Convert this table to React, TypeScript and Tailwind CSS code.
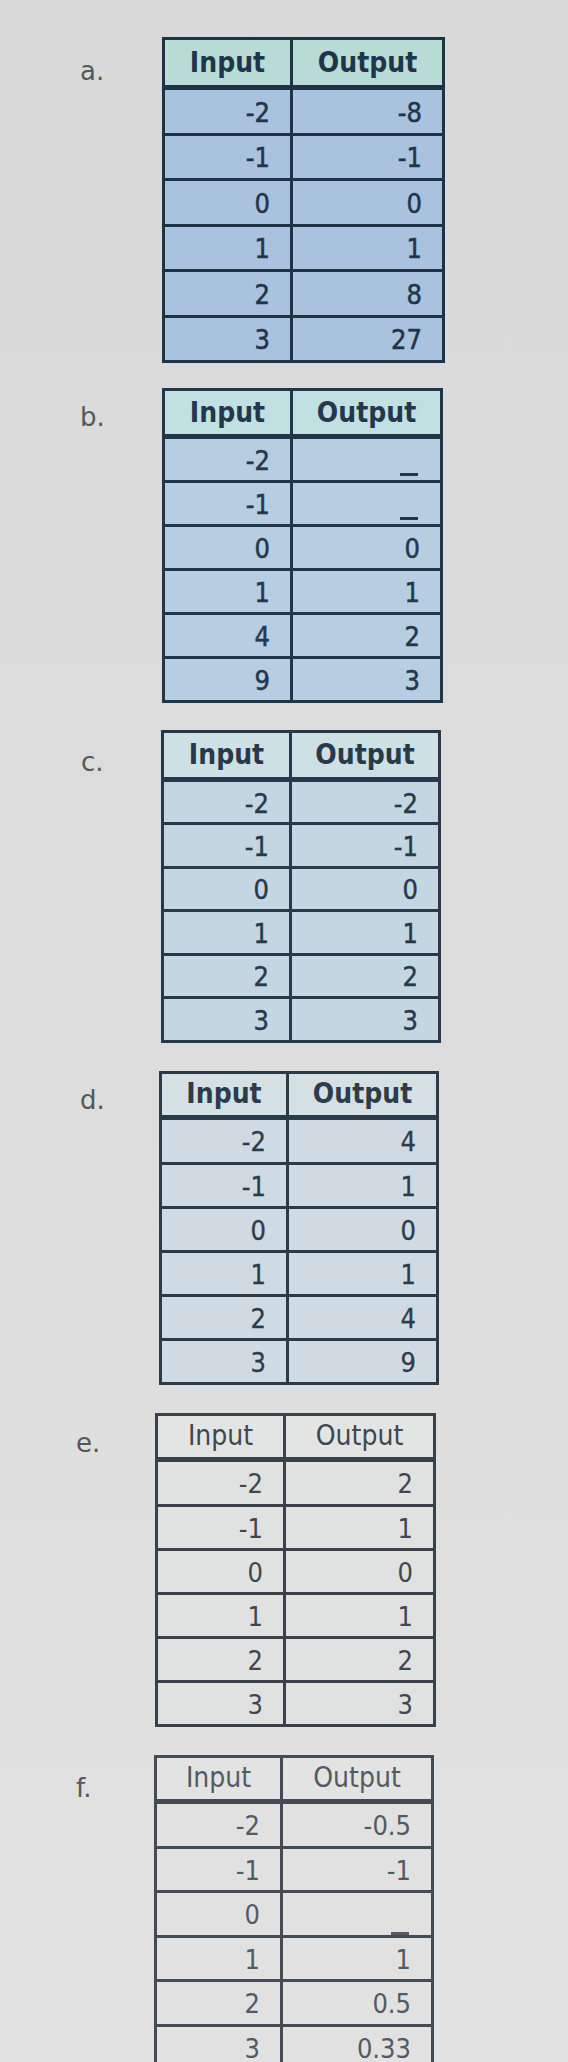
import React from "react";

type T = {
  label: string;
  rows: [string, string][];
  sectionCls: string;
  labelCls: string;
  tableCls: string;
  headCls: string;
  bodyCls: string;
  inCls: string;
  lineCls: string;
  textCls: string;
  dashCls: string;
  strokeCls: string;
  headH: string;
  rowH: string;
  firstRowH: string;
  headWeight: string;
};

const FONT = "font-['DejaVu_Sans_Condensed','DejaVu_Sans',sans-serif]";

const tables: T[] = [
  {
    label: "a.",
    rows: [["-2", "-8"], ["-1", "-1"], ["0", "0"], ["1", "1"], ["2", "8"], ["3", "27"]],
    sectionCls: "pt-[37px] pl-[80px]",
    labelCls: "w-[82px] pt-[21px]",
    tableCls: "w-[283px] border-[#1e3346]",
    headCls: "bg-[#b8dcd5]",
    bodyCls: "bg-[#a9c2dd]",
    inCls: "w-[128px]",
    lineCls: "border-[#1e3346]",
    textCls: "text-[#1f3549]",
    dashCls: "bg-[#1f3549]",
    strokeCls: "[-webkit-text-stroke:0.5px_#1f3549]",
    headH: "h-[45px]",
    rowH: "h-[45.5px]",
    firstRowH: "h-[47.5px]",
    headWeight: "font-bold",
  },
  {
    label: "b.",
    rows: [["-2", "_"], ["-1", "_"], ["0", "0"], ["1", "1"], ["4", "2"], ["9", "3"]],
    sectionCls: "pt-[25px] pl-[80px]",
    labelCls: "w-[82px] pt-[16px]",
    tableCls: "w-[281px] border-[#22364a]",
    headCls: "bg-[#c1e0e1]",
    bodyCls: "bg-[#b6cde2]",
    inCls: "w-[128px]",
    lineCls: "border-[#22364a]",
    textCls: "text-[#23384c]",
    dashCls: "bg-[#23384c]",
    strokeCls: "[-webkit-text-stroke:0.5px_#23384c]",
    headH: "h-[43px]",
    rowH: "h-[44px]",
    firstRowH: "h-[46px]",
    headWeight: "font-bold",
  },
  {
    label: "c.",
    rows: [["-2", "-2"], ["-1", "-1"], ["0", "0"], ["1", "1"], ["2", "2"], ["3", "3"]],
    sectionCls: "pt-[27px] pl-[81px]",
    labelCls: "w-[80px] pt-[19px]",
    tableCls: "w-[280px] border-[#27394a]",
    headCls: "bg-[#cde0e4]",
    bodyCls: "bg-[#c4d6e2]",
    inCls: "w-[128px]",
    lineCls: "border-[#27394a]",
    textCls: "text-[#27394b]",
    dashCls: "bg-[#27394b]",
    strokeCls: "[-webkit-text-stroke:0.4px_#27394b]",
    headH: "h-[44px]",
    rowH: "h-[43.5px]",
    firstRowH: "h-[45px]",
    headWeight: "font-bold",
  },
  {
    label: "d.",
    rows: [["-2", "4"], ["-1", "1"], ["0", "0"], ["1", "1"], ["2", "4"], ["3", "9"]],
    sectionCls: "pt-[28px] pl-[80px]",
    labelCls: "w-[79px] pt-[16px]",
    tableCls: "w-[280px] border-[#2c3b48]",
    headCls: "bg-[#d4e0e3]",
    bodyCls: "bg-[#cfdae2]",
    inCls: "w-[127px]",
    lineCls: "border-[#2c3b48]",
    textCls: "text-[#2e3c49]",
    dashCls: "bg-[#2e3c49]",
    strokeCls: "[-webkit-text-stroke:0.3px_#2e3c49]",
    headH: "h-[41px]",
    rowH: "h-[44px]",
    firstRowH: "h-[47px]",
    headWeight: "font-bold",
  },
  {
    label: "e.",
    rows: [["-2", "2"], ["-1", "1"], ["0", "0"], ["1", "1"], ["2", "2"], ["3", "3"]],
    sectionCls: "pt-[28px] pl-[76px]",
    labelCls: "w-[79px] pt-[17px]",
    tableCls: "w-[281px] border-[#3b4148]",
    headCls: "bg-[#e3e4e4]",
    bodyCls: "bg-[#e0e1e1]",
    inCls: "w-[128px]",
    lineCls: "border-[#3b4148]",
    textCls: "text-[#3f4750]",
    dashCls: "bg-[#3f4750]",
    strokeCls: "",
    headH: "h-[41px]",
    rowH: "h-[44px]",
    firstRowH: "h-[47px]",
    headWeight: "font-normal",
  },
  {
    label: "f.",
    rows: [["-2", "-0.5"], ["-1", "-1"], ["0", "_"], ["1", "1"], ["2", "0.5"], ["3", "0.33"]],
    sectionCls: "pt-[28px] pl-[76px]",
    labelCls: "w-[78px] pt-[20px]",
    tableCls: "w-[280px] border-[#454b52]",
    headCls: "bg-[#e3e3e3]",
    bodyCls: "bg-[#e1e1e1]",
    inCls: "w-[126px]",
    lineCls: "border-[#454b52]",
    textCls: "text-[#535a62]",
    dashCls: "bg-[#535a62]",
    strokeCls: "",
    headH: "h-[41px]",
    rowH: "h-[44.5px]",
    firstRowH: "h-[47px]",
    headWeight: "font-normal",
  },
];

function Cell({ v, t }: { v: string; t: T }) {
  return (
    <div className="flex h-full items-center justify-end pr-[20px] pt-[2px]">
      <span className={`${FONT} text-[27px] leading-none ${t.textCls} ${t.strokeCls}`}>{v}</span>
    </div>
  );
}

function Dash({ t, last }: { t: T; last?: boolean }) {
  return (
    <div className={`flex h-full items-end justify-end pr-[22px] ${last ? "pb-0" : "pb-[4px]"}`}>
      <span className={`block h-[3px] w-[18px] ${t.dashCls}`} />
    </div>
  );
}

function Table({ t }: { t: T }) {
  return (
    <div className={`${t.sectionCls} flex items-start`}>
      <div className={`${t.labelCls} shrink-0`}>
        <span className="font-['DejaVu_Sans',sans-serif] text-[26px] leading-none text-[#55585a]">
          {t.label}
        </span>
      </div>
      <div className={`${t.tableCls} shrink-0 border-[3px]`}>
        <div className={`flex ${t.headH} ${t.headCls}`}>
          <div className={`${t.inCls} shrink-0 border-r-[3px] ${t.lineCls} flex items-center justify-center`}>
            <span className={`${FONT} ${t.headWeight} text-[28px] leading-none ${t.textCls}`}>Input</span>
          </div>
          <div className="flex flex-1 items-center justify-center">
            <span className={`${FONT} ${t.headWeight} text-[28px] leading-none ${t.textCls}`}>Output</span>
          </div>
        </div>
        {t.rows.map((r, i) => (
          <div
            key={i}
            className={`flex ${i === 0 ? `${t.firstRowH} border-t-[5px]` : `${t.rowH} border-t-[3px]`} ${t.lineCls} ${t.bodyCls}`}
          >
            <div className={`${t.inCls} shrink-0 border-r-[3px] ${t.lineCls}`}>
              <Cell v={r[0]} t={t} />
            </div>
            <div className="flex-1">
              {r[1] === "_" ? <Dash t={t} last={t.label === "f."} /> : <Cell v={r[1]} t={t} />}
            </div>
          </div>
        ))}
      </div>
    </div>
  );
}

export default function App() {
  return (
    <div className="h-[2062px] w-[568px] overflow-hidden bg-gradient-to-b from-[#d8d9d8] via-[#dcdddc] to-[#e2e2e2]">
      {tables.map((t) => (
        <Table key={t.label} t={t} />
      ))}
    </div>
  );
}
